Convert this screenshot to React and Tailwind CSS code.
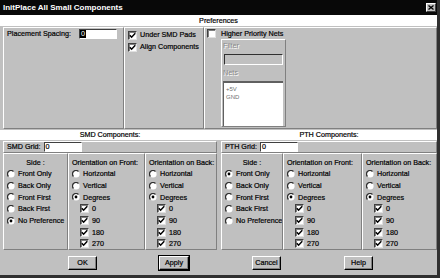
import React from "react";

function Check({ checked = true }) {
  return (
    <span className="inline-flex w-[9px] h-[9px] shrink-0 items-center justify-center bg-white border border-t-[#404040] border-l-[#404040] border-b-[#e0e0e0] border-r-[#e0e0e0] shadow-[inset_1px_1px_0_#808080]">
      {checked && (
        <svg width="7" height="7" viewBox="0 0 7 7">
          <path d="M0.8 3.2 L2.6 5.2 L6.3 1.2" stroke="black" strokeWidth="1.5" fill="none" />
        </svg>
      )}
    </span>
  );
}

function Radio({ checked = false }) {
  return (
    <svg width="8" height="8" viewBox="0 0 8 8" className="shrink-0">
      <circle cx="4" cy="4" r="3.6" fill="white" />
      <path d="M6.5 1.5 A3.5 3.5 0 0 0 1.5 6.5" stroke="#303030" strokeWidth="1.3" fill="none" />
      {checked && <circle cx="4" cy="4" r="1.4" fill="black" />}
    </svg>
  );
}

const raised = "border border-t-white border-l-white border-b-[#808080] border-r-[#808080]";

function RadioRow({ label, checked }) {
  return (
    <div className="h-[11.7px] flex items-center gap-[3px] pl-[3px]">
      <Radio checked={checked} />
      <span className="whitespace-nowrap">{label}</span>
    </div>
  );
}

function CheckRow({ label }) {
  return (
    <div className="h-[11.7px] flex items-center gap-[3px] pl-[11px]">
      <Check />
      <span>{label}</span>
    </div>
  );
}

function SideCol({ w, selected }) {
  const items = ["Front Only", "Back Only", "Front First", "Back First", "No Preference"];
  return (
    <div className={`${raised} ${w} shrink-0 pt-[3px] overflow-hidden`}>
      <div className="h-[11px] flex items-center justify-center">Side :</div>
      {items.map((it) => (
        <RadioRow key={it} label={it} checked={it === selected} />
      ))}
    </div>
  );
}

function OrientCol({ w, title }) {
  return (
    <div className={`${raised} ${w} pt-[3px] overflow-hidden`}>
      <div className="h-[11px] flex items-center pl-[3px] whitespace-nowrap">{title}</div>
      <RadioRow label="Horizontal" />
      <RadioRow label="Vertical" />
      <RadioRow label="Degrees" checked />
      <CheckRow label="0" />
      <CheckRow label="90" />
      <CheckRow label="180" />
      <CheckRow label="270" />
    </div>
  );
}

function Half({ label, side, w1, w2, w3 }) {
  return (
    <div className="flex flex-col">
      <div className={`${raised} h-[12px] flex items-center pl-[3px]`}>
        <span className="whitespace-nowrap">{label}</span>
        <span className="ml-[3px] w-[38px] h-[10px] bg-white border border-t-[#404040] border-l-[#404040] border-b-white border-r-white flex items-center pl-[1px]">
          0
        </span>
      </div>
      <div className="h-[97px] flex">
        <SideCol w={w1} selected={side} />
        <OrientCol w={w2} title="Orientation on Front:" />
        <OrientCol w={w3} title="Orientation on Back:" />
      </div>
    </div>
  );
}

function Btn({ label, def }) {
  return (
    <div
      className={`h-[14px] flex items-center justify-center bg-[#c0c0c0] border border-t-white border-l-white border-b-black border-r-black shadow-[inset_-1px_-1px_0_#808080] ${
        def ? "outline outline-1 outline-black w-[30px]" : "w-[29px]"
      }`}
    >
      {label}
    </div>
  );
}

export default function App() {
  return (
    <div className="w-[440px] h-[278px] bg-[#c0c0c0] border-r-[3px] border-b-[3px] border-r-[#303030] border-b-[#303030] flex flex-col overflow-hidden font-['Liberation_Sans',Arial,sans-serif] text-[7.2px] text-black leading-none [-webkit-text-stroke:0.2px_black]">
      {/* Title bar */}
      <div className="h-[15px] shrink-0 bg-[#080808] flex items-center justify-between pl-[3px] pr-[1px] [-webkit-text-stroke:0]">
        <span className="text-white text-[8px] font-bold">InitPlace All Small Components</span>
        <span className="w-[10px] h-[9px] bg-[#c0c0c0] border border-t-white border-l-white border-b-[#404040] border-r-[#404040] flex items-center justify-center">
          <svg width="6" height="5" viewBox="0 0 6 5">
            <path d="M0.5 0.5 L5.5 4.5 M5.5 0.5 L0.5 4.5" stroke="black" strokeWidth="1.3" />
          </svg>
        </span>
      </div>

      {/* Preferences header */}
      <div className="h-[11px] shrink-0 bg-white flex items-center justify-center">Preferences</div>

      {/* Preferences panels */}
      <div className="h-[103px] shrink-0 flex pl-[3px] pt-[1px]">
        <div className={`${raised} w-[121px]`}>
          <div className="h-[11px] flex items-center pl-[3px]">
            <span className="w-[72px] whitespace-nowrap">Placement Spacing:</span>
            <span className="w-[38px] h-[10px] bg-white border border-t-[#404040] border-l-[#404040] border-b-white border-r-white flex items-center">
              <span className="bg-black text-white px-[1px] h-[8px] flex items-center [-webkit-text-stroke:0]">0</span>
            </span>
          </div>
        </div>
        <div className={`${raised} w-[80px] pt-[1px]`}>
          <div className="h-[12px] flex items-center gap-[3px] pl-[3px]">
            <Check />
            <span className="whitespace-nowrap">Under SMD Pads</span>
          </div>
          <div className="h-[12px] flex items-center gap-[3px] pl-[3px]">
            <Check />
            <span className="whitespace-nowrap">Align Components</span>
          </div>
        </div>
        <div className={`${raised} flex-1 flex flex-col`}>
          <div className="h-[11px] shrink-0 flex items-center gap-[5px] pl-[2px]">
            <Check checked={false} />
            <span>Higher Priority Nets</span>
          </div>
          <div className={`ml-[16px] w-[65px] flex-1 mb-[1px] ${raised} flex flex-col`}>
            <div className="h-[12px] flex items-center pl-[1px] text-[#8a8a8a] [-webkit-text-stroke:0] [text-shadow:1px_1px_0_#fff]">Filter</div>
            <div className="ml-[2px] mt-[2px] w-[59px] h-[11px] border border-t-[#303030] border-l-[#303030] border-b-white border-r-white bg-[#c0c0c0]"></div>
            <div className="mt-[2px] h-[12px] flex items-center pl-[1px] text-[#8a8a8a] [-webkit-text-stroke:0] [text-shadow:1px_1px_0_#fff]">Nets</div>
            <div className="ml-[1px] mt-[2px] w-[60px] h-[45px] bg-white border-t-2 border-l border-t-[#606060] border-l-[#606060] pl-[2px] pt-[3px] text-[6px] text-[#707070] [-webkit-text-stroke:0]">
              <div className="h-[8px]">+5V</div>
              <div className="h-[8px]">GND</div>
            </div>
          </div>
        </div>
      </div>

      {/* Section header band */}
      <div className="mt-[1px] h-[10px] shrink-0 bg-white flex">
        <div className="w-[217px] flex items-center justify-center pl-[3px]">SMD Components:</div>
        <div className="flex-1 flex items-center justify-center pl-[4px]">PTH Components:</div>
      </div>

      {/* Lower components area */}
      <div className="mt-[1px] h-[109px] shrink-0 flex pl-[3px] gap-[4px]">
        <div className="w-[214px]">
          <Half label="SMD Grid:" side="No Preference" w1="w-[65px]" w2="w-[77px]" w3="flex-1" />
        </div>
        <div className="flex-1">
          <Half label="PTH Grid:" side="Front Only" w1="w-[62px]" w2="w-[79px]" w3="flex-1" />
        </div>
      </div>

      {/* Buttons */}
      <div className="flex-1 flex items-center pl-[68px]">
        <Btn label="OK" />
        <div className="ml-[62px]">
          <Btn label="Apply" def />
        </div>
        <div className="ml-[63px]">
          <Btn label="Cancel" />
        </div>
        <div className="ml-[63px]">
          <Btn label="Help" />
        </div>
      </div>
    </div>
  );
}
